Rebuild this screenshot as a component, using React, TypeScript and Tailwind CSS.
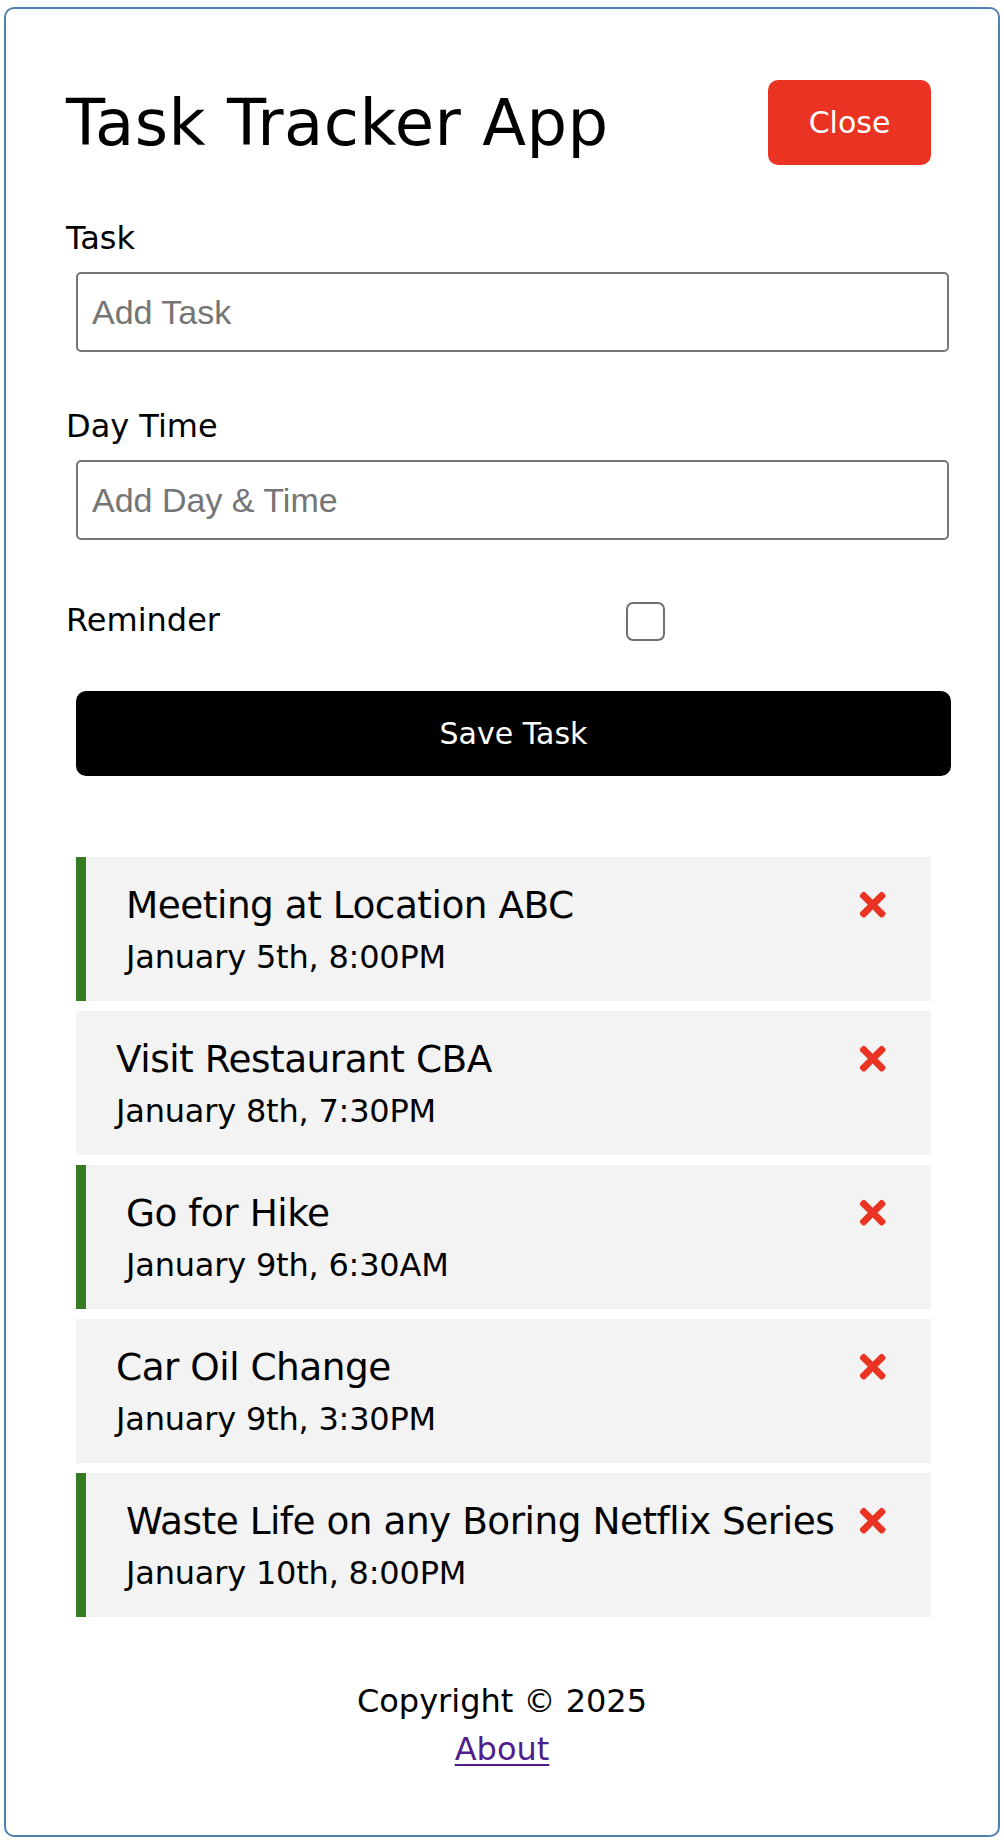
import React from "react";
import { FaTimes } from "react-icons/fa";

type Task = { id: number; text: string; day: string; reminder: boolean };

const tasks: Task[] = [
  { id: 1, text: "Meeting at Location ABC", day: "January 5th, 8:00PM", reminder: true },
  { id: 2, text: "Visit Restaurant CBA", day: "January 8th, 7:30PM", reminder: false },
  { id: 3, text: "Go for Hike", day: "January 9th, 6:30AM", reminder: true },
  { id: 4, text: "Car Oil Change", day: "January 9th, 3:30PM", reminder: false },
  { id: 5, text: "Waste Life on any Boring Netflix Series", day: "January 10th, 8:00PM", reminder: true },
];

function TaskItem({ task }: { task: Task }) {
  return (
    <div
      className={
        task.reminder
          ? "ml-[10px] mb-[10px] w-[855px] h-[144px] bg-[#f3f3f3] border-l-[10px] border-[#367c22] pl-[40px] pr-[40px] py-[20px]"
          : "ml-[10px] mb-[10px] w-[855px] h-[144px] bg-[#f3f3f3] pl-[40px] pr-[40px] py-[20px]"
      }
    >
      <h3 className="flex items-center justify-between text-[37.44px] leading-[56px] font-normal text-black">
        <span className="whitespace-nowrap tracking-[-0.5px]">{task.text}</span>
        <FaTimes className="text-[#ea3323] shrink-0" />
      </h3>
      <p className="text-[32px] leading-[48px] text-black tracking-[-0.2px]">{task.day}</p>
    </div>
  );
}

export default function App() {
  return (
    <div
      className="w-full bg-white pt-[7px] pb-[10px]"
      style={{ fontFamily: '"DejaVu Sans", "Noto Sans", sans-serif' }}
    >
      <div className="mx-auto w-[996px] rounded-[10px] border-2 border-[#5080b1] px-[60px] pt-[61px] pb-[62px]">
        <header className="flex h-[105px] items-center justify-between">
          <h1 className="text-[64px] leading-[96px] font-normal text-black tracking-[0.5px]">Task Tracker App</h1>
          <button className="mr-[7px] h-[85px] w-[163px] rounded-[10px] bg-[#ea3323] text-[30px] text-white">
            Close
          </button>
        </header>

        <form className="mt-[39px]">
          <div>
            <label className="block text-[32px] leading-[48px] text-black">Task</label>
            <input
              type="text"
              placeholder="Add Task"
              className="mt-[10px] ml-[10px] block h-[80px] w-[873px] rounded-[5px] border-2 border-[#767676] px-[14px] text-[34px] placeholder:text-[#757575]"
              style={{ fontFamily: '"Liberation Sans", Arial, sans-serif' }}
            />
          </div>
          <div className="mt-[50px]">
            <label className="block text-[32px] leading-[48px] text-black">Day Time</label>
            <input
              type="text"
              placeholder="Add Day & Time"
              className="mt-[10px] ml-[10px] block h-[80px] w-[873px] rounded-[5px] border-2 border-[#767676] px-[14px] text-[34px] placeholder:text-[#757575]"
              style={{ fontFamily: '"Liberation Sans", Arial, sans-serif' }}
            />
          </div>
          <div className="mt-[50px] flex h-[60px] items-center">
            <label className="w-[560px] text-[32px] leading-[48px] text-black">Reminder</label>
            <input
              type="checkbox"
              className="mt-[3px] h-[39px] w-[39px] appearance-none rounded-[7px] border-[2.5px] border-[#707070] bg-white"
            />
          </div>
          <button
            type="button"
            className="mt-[41px] ml-[10px] block h-[85px] w-[875px] rounded-[10px] bg-black text-[30px] text-white"
          >
            Save Task
          </button>
        </form>

        <div className="mt-[81px] flex flex-col">
          {tasks.map((t) => (
            <TaskItem key={t.id} task={t} />
          ))}
        </div>

        <footer className="mt-[50px] text-center">
          <p className="text-[32px] leading-[48px] text-black">Copyright © 2025</p>
          <a
            href="#"
            className="text-[32px] leading-[48px] text-[#4f1e8c] underline decoration-2 underline-offset-[4px]"
          >
            About
          </a>
        </footer>
      </div>
    </div>
  );
}
